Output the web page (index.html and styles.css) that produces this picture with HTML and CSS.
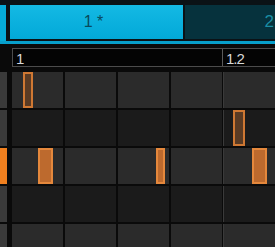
FILE: index.html
```html
<!DOCTYPE html>
<html lang="en">

<head>
    <meta charset="UTF-8">
    <meta name="viewport" content="width=device-width, initial-scale=1.0">
    <title>Pattern Editor</title>
    <link rel="stylesheet" href="styles.css">
</head>

<body>
    <!-- Pattern tabs -->
    <div class="tabbar">
        <div class="tab-stub"></div>
        <div class="tab active">1 *</div>
        <div class="tab"><span class="tab-label">2</span></div>
    </div>

    <!-- Ruler -->
    <div class="ruler">
        <div class="ruler-seg first">1</div>
        <div class="ruler-seg">1.2</div>
    </div>

    <!-- Step grid -->
    <div class="grid">
        <div class="keys">
            <div class="key"></div>
            <div class="key"></div>
            <div class="key selected"></div>
            <div class="key"></div>
            <div class="key"></div>
        </div>
        <div class="cells" id="cells"></div>
    </div>

    <script>
        // Rows (light / dark) and notes placed on the grid
        const rows = ["light", "dark", "light", "dark", "light"];
        const notas = [
            { row: 0, x: 11, w: 10, bright: false },
            { row: 1, x: 221, w: 12, bright: false },
            { row: 2, x: 26, w: 15, bright: true },
            { row: 2, x: 144, w: 9, bright: true },
            { row: 2, x: 240, w: 15, bright: true }
        ];

        const cells = document.getElementById("cells");

        rows.forEach(tipo => {
            const row = document.createElement("div");
            row.className = "row " + tipo;
            for (let i = 0; i < 5; i++) {
                const cell = document.createElement("div");
                cell.className = i === 4 ? "cell bar" : "cell";
                row.appendChild(cell);
            }
            cells.appendChild(row);
        });

        notas.forEach(n => {
            const note = document.createElement("div");
            note.className = n.bright ? "note bright" : "note";
            note.style.left = n.x + "px";
            note.style.top = (n.row * 38) + "px";
            note.style.width = n.w + "px";
            cells.appendChild(note);
        });
    </script>
</body>

</html>
```

FILE: styles.css
```css
body {
    margin: 0;
    width: 275px;
    height: 247px;
    overflow: hidden;
    background-color: #0a0a0a;
    font-family: "Liberation Sans", Arial, sans-serif;
}

.tabbar {
    display: flex;
    align-items: flex-start;
    height: 36px;
    padding-top: 5px;
    background-color: #0b1216;
    border-bottom: 3px solid #079fcb;
}

.tab-stub {
    width: 6px;
    height: 36px;
    background-color: #05acd9;
}

.tab {
    height: 34px;
    line-height: 34px;
    margin-left: 2px;
    flex: 1;
    background-color: #06323d;
    color: #1a8ea4;
    font-size: 17px;
    text-align: right;
    overflow: hidden;
    white-space: nowrap;
}

.tab-label {
    margin-right: 1px;
}

.tab.active {
    flex: none;
    width: 173px;
    margin-left: 4px;
    background: linear-gradient(#14b9e4, #02a9d8);
    color: #084a5c;
    font-size: 16px;
    text-align: center;
    padding-right: 6px;
    box-sizing: border-box;
}

.ruler {
    display: flex;
    height: 17px;
    margin: 4px 0 0 12px;
    border: 1px solid #4c4c4c;
    border-right: none;
    background-color: #040404;
    color: #d8d8d8;
    font-size: 15px;
    letter-spacing: -1px;
    line-height: 19px;
}

.ruler-seg {
    flex: 1;
    padding-left: 3px;
}

.ruler-seg.first {
    flex: none;
    width: 206px;
    border-right: 1px solid #5a5a5a;
}

.grid {
    display: flex;
    margin-top: 5px;
}

.keys {
    display: flex;
    flex-direction: column;
    gap: 2px;
    width: 7px;
    margin-right: 5px;
}

.key {
    height: 36px;
    background-color: #3a3a3a;
}

.key:last-child {
    height: 23px;
}

.key.selected {
    background-color: #f0801f;
}

.cells {
    position: relative;
    display: flex;
    flex-direction: column;
    gap: 2px;
    flex: 1;
}

.row {
    display: flex;
    gap: 2px;
    height: 36px;
}

.row:last-child {
    height: 23px;
}

.cell {
    width: 51px;
}

.row.light .cell {
    background-color: #2b2b2b;
}

.row.dark .cell {
    background-color: #1b1b1b;
}

.cell.bar {
    box-shadow: -1px 0 0 #3a3a3a;
}

.note {
    position: absolute;
    height: 36px;
    box-sizing: border-box;
    border: 2px solid #cf7833;
    background-color: #5a3b24;
}

.note.bright {
    border-color: #e5883c;
    background-color: #bd6a2e;
}
```
